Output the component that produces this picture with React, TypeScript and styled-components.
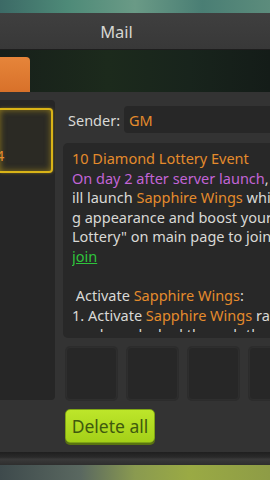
import * as React from 'react'
import styled, { createGlobalStyle } from 'styled-components'

const GlobalStyle = createGlobalStyle`
  html, body {
    margin: 0;
    padding: 0;
    background: #1c2420;
    overflow: hidden;
  }
  * {
    box-sizing: border-box;
  }
`

const ORANGE = '#e48b2c'
const PURPLE = '#c264d6'
const WHITE = '#d9d9d6'

export default function App() {
    return (
        <Screen>
            <GlobalStyle/>
            <SceneTop/>
            <Header>Mail</Header>
            <TabStrip>
                <Tab/>
            </TabStrip>
            <Panel>
                <MailList>
                    <MailItem>
                        <ItemText>4</ItemText>
                    </MailItem>
                </MailList>
                <Detail>
                    <SenderRow>
                        <SenderLabel>Sender:</SenderLabel>
                        <SenderBox>GM</SenderBox>
                    </SenderRow>
                    <Body>
                        <Scroll>
                            <Line><Hl color={ORANGE}>10 Diamond Lottery Event</Hl></Line>
                            <Line><Hl color={PURPLE}>On day 2 after server launch</Hl>, the game w</Line>
                            <Line>ill launch <Hl color={ORANGE}>Sapphire Wings</Hl> which can chan</Line>
                            <Line>g appearance and boost your stats. Tap "</Line>
                            <Line>Lottery" on main page to join the event</Line>
                            <Line><Link>join</Link></Line>
                            <Line>&nbsp;</Line>
                            <Line>&nbsp;Activate <Hl color={ORANGE}>Sapphire Wings</Hl>:</Line>
                            <Line>1. Activate <Hl color={ORANGE}>Sapphire Wings</Hl> raises your power</Line>
                            <Line>can be unlocked through the lottery it</Line>
                        </Scroll>
                    </Body>
                    <Slots>
                        <Slot/>
                        <Slot/>
                        <Slot/>
                        <Slot/>
                    </Slots>
                    <DeleteButton>Delete all</DeleteButton>
                </Detail>
            </Panel>
            <PanelEdge/>
            <SceneBottom/>
        </Screen>
    )
}

const Screen = styled.div`
  width: 270px;
  height: 480px;
  overflow: hidden;
  display: flex;
  flex-direction: column;
  font-family: "Noto Sans", "Open Sans", sans-serif;
`

const SceneTop = styled.div`
  height: 13px;
  flex-shrink: 0;
  background: linear-gradient(90deg, #3c6a66 0%, #4e8a78 25%, #6a9a86 50%, #4a7e74 75%, #5c8c7c 100%);
`

const Header = styled.div`
  height: 36px;
  flex-shrink: 0;
  display: flex;
  align-items: center;
  justify-content: center;
  padding-right: 37px;
  background: linear-gradient(#3f3f3f, #383838);
  color: #d6d6d2;
  font-size: 16.5px;
`

const TabStrip = styled.div`
  height: 43px;
  flex-shrink: 0;
  display: flex;
  align-items: flex-end;
  background: linear-gradient(90deg, #17201a, #1c2a1c 40%, #18241c 70%, #141c18);
  border-top: 1px solid #1e1e1e;
`

const Tab = styled.div`
  width: 30px;
  height: 35px;
  border-radius: 0 4px 0 0;
  background: linear-gradient(#e6853a, #d8712a);
`

const Panel = styled.div`
  height: 360px;
  flex-shrink: 0;
  display: flex;
  align-items: flex-start;
  padding-top: 8px;
  background: #333333;
`

const MailList = styled.div`
  width: 55px;
  height: 300px;
  flex-shrink: 0;
  padding-top: 8px;
  background: #262626;
  border-radius: 0 4px 4px 0;
`

const MailItem = styled.div`
  width: 53px;
  height: 65px;
  display: flex;
  align-items: flex-end;
  padding: 0 0 6px 0;
  background: #2b2a24;
  border: 2px solid #d9b317;
  border-left: none;
  border-radius: 0 4px 4px 0;
  box-shadow: inset 0 0 6px rgba(217, 179, 23, 0.55), 0 0 3px rgba(217, 179, 23, 0.5);
`

const ItemText = styled.span`
  color: ${ORANGE};
  font-size: 14.5px;
  margin-left: -4px;
`

const Detail = styled.div`
  width: 240px;
  flex-shrink: 0;
  margin-left: 8px;
  display: flex;
  flex-direction: column;
`

const SenderRow = styled.div`
  display: flex;
  align-items: center;
  margin-top: 6px;
  height: 27px;
`

const SenderLabel = styled.span`
  width: 61px;
  padding-left: 5px;
  color: ${WHITE};
  font-size: 14.5px;
`

const SenderBox = styled.div`
  flex: 1;
  height: 27px;
  display: flex;
  align-items: center;
  padding-left: 5px;
  background: #272727;
  border-radius: 4px;
  color: ${ORANGE};
  font-size: 14.5px;
`

const Body = styled.div`
  margin-top: 10px;
  height: 195px;
  padding: 6px 0 6px 9px;
  background: #282828;
  border-radius: 5px;
  color: ${WHITE};
  font-size: 14.5px;
  line-height: 19.6px;
`

const Scroll = styled.div`
  height: 100%;
  overflow: hidden;
`

const Line = styled.div`
  white-space: nowrap;
`

const Hl = styled.span<{ color: string }>`
  color: ${p => p.color};
`

const Link = styled.span`
  color: #2fc43c;
  text-decoration: underline;
`

const Slots = styled.div`
  margin-top: 9px;
  display: flex;
  gap: 10px;
  padding-left: 3px;
`

const Slot = styled.div`
  width: 51px;
  height: 53px;
  flex-shrink: 0;
  background: #272727;
  border: 1px solid #2e2e2e;
  border-radius: 4px;
  box-shadow: 0 0 0 1px #2c2c2c;
`

const DeleteButton = styled.div`
  margin-top: 9px;
  margin-left: 2px;
  width: 90px;
  height: 34px;
  display: flex;
  align-items: center;
  justify-content: center;
  background: linear-gradient(#bde62a, #a4d018);
  border: 1px solid #7ea414;
  border-radius: 5px;
  box-shadow: 0 2px 0 #5a7410;
  color: #3f5a0e;
  font-size: 17.5px;
`

const PanelEdge = styled.div`
  height: 13px;
  flex-shrink: 0;
  background: linear-gradient(#1f1f1f, #2a2a2a 40%, #3a3a3a 55%, #2e2e2e);
`

const SceneBottom = styled.div`
  flex: 1;
  background: linear-gradient(90deg, #3e4a4c 0%, #5a6860 30%, #8a9a50 50%, #9aaa44 70%, #8e9c46 100%);
`
